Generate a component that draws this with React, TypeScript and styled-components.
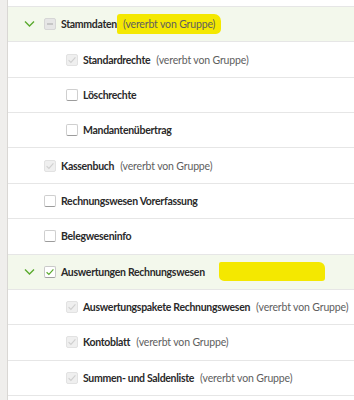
import React from "react";
import styled, { createGlobalStyle, css } from "styled-components";

const Global = createGlobalStyle`
  html, body { margin: 0; padding: 0; background: #fff; }
  body { font-family: Lato, "Open Sans", sans-serif; overflow: hidden; }
`;

const Page = styled.div`
  display: flex;
  width: 354px;
  height: 400px;
  overflow: hidden;
`;

const SideStrip = styled.div`
  width: 7px;
  flex: none;
  background: #efeeec;
  border-right: 1px solid #d9d7d4;
`;

const List = styled.div`
  flex: 1;
  display: flex;
  flex-direction: column;
`;

const TopGap = styled.div`
  height: 6px;
  flex: none;
  border-bottom: 1px solid #e6e6e6;
`;

const Row = styled.div<{ $group?: boolean; $level: number }>`
  flex: none;
  height: 34.36px;
  border-bottom: 1px solid #e6e6e6;
  display: flex;
  align-items: center;
  padding-left: ${(p) => (p.$level === 2 ? 58 : 36)}px;
  background: ${(p) => (p.$group ? "#f3f8ec" : "#fff")};
  position: relative;
`;

const Chevron = styled.svg`
  position: absolute;
  left: 16px;
  top: 50%;
  margin-top: -4px;
  width: 11px;
  height: 8px;
`;

type BoxState = "unchecked" | "checked" | "inherited" | "partial";

const Box = styled.span<{ $state: BoxState }>`
  width: 12px;
  height: 12px;
  flex: none;
  box-sizing: border-box;
  border-radius: 2px;
  display: inline-flex;
  align-items: center;
  justify-content: center;
  margin-right: 5px;
  ${(p) =>
    p.$state === "unchecked" &&
    css`
      background: #fff;
      border: 1px solid #cfcfcf;
      border-bottom-color: #9c9c9c;
    `}
  ${(p) =>
    p.$state === "checked" &&
    css`
      background: #fff;
      border: 1px solid #c9c9c9;
      border-bottom-color: #a0a0a0;
    `}
  ${(p) =>
    p.$state === "inherited" &&
    css`
      background: #efefef;
      border: 1px solid #e2e2e2;
    `}
  ${(p) =>
    p.$state === "partial" &&
    css`
      background: #e6e6e6;
      border: 1px solid #d6d6d6;
    `}
`;

const Label = styled.span`
  font-size: 10.5px;
  font-weight: 700;
  letter-spacing: -0.3px;
  color: #2a2a2a;
  white-space: nowrap;
`;

const Hint = styled.span<{ $marked?: boolean }>`
  font-size: 10.5px;
  font-weight: 400;
  letter-spacing: -0.15px;
  color: #5e5e5e;
  white-space: nowrap;
  margin-left: 6px;
  ${(p) =>
    p.$marked &&
    css`
      background: #f4e800;
      margin-left: 0px;
      padding: 4px 6px 4px 6px;
      border-radius: 3px 7px 5px 2px;
    `}
`;

const Marker = styled.span`
  display: inline-block;
  margin-left: 14px;
  width: 106px;
  height: 19px;
  background: #f4e800;
  border-radius: 2px 6px 3px 5px;
`;

function BoxIcon({ state }: { state: BoxState }) {
  return (
    <Box $state={state}>
      {state === "checked" && (
        <svg width="10" height="10" viewBox="0 0 10 10">
          <path d="M1.6 5.2 L3.9 7.4 L8.4 2.3" fill="none" stroke="#5aaa2e" strokeWidth="1.2" />
        </svg>
      )}
      {state === "inherited" && (
        <svg width="10" height="10" viewBox="0 0 10 10">
          <path d="M1.6 5.2 L3.9 7.4 L8.4 2.3" fill="none" stroke="#cfcfcf" strokeWidth="1.1" />
        </svg>
      )}
      {state === "partial" && (
        <svg width="10" height="10" viewBox="0 0 10 10">
          <path d="M2 5 H8" stroke="#b8b8b8" strokeWidth="1.4" />
        </svg>
      )}
    </Box>
  );
}

type Item = {
  label: string;
  level: number;
  state: BoxState;
  group?: boolean;
  hint?: boolean;
  marked?: boolean;
  marker?: boolean;
};

const items: Item[] = [
  { label: "Stammdaten", level: 1, state: "partial", group: true, hint: true, marked: true },
  { label: "Standardrechte", level: 2, state: "inherited", hint: true },
  { label: "Löschrechte", level: 2, state: "unchecked" },
  { label: "Mandantenübertrag", level: 2, state: "unchecked" },
  { label: "Kassenbuch", level: 1, state: "inherited", hint: true },
  { label: "Rechnungswesen Vorerfassung", level: 1, state: "unchecked" },
  { label: "Belegweseninfo", level: 1, state: "unchecked" },
  { label: "Auswertungen Rechnungswesen", level: 1, state: "checked", group: true, marker: true },
  { label: "Auswertungspakete Rechnungswesen", level: 2, state: "inherited", hint: true },
  { label: "Kontoblatt", level: 2, state: "inherited", hint: true },
  { label: "Summen- und Saldenliste", level: 2, state: "inherited", hint: true },
];

export default function App() {
  return (
    <>
      <Global />
      <Page>
        <SideStrip />
        <List>
          <TopGap />
          {items.map((it) => (
            <Row key={it.label} $group={it.group} $level={it.level}>
              {it.group && (
                <Chevron viewBox="0 0 11 8">
                  <path d="M1 1.5 L5.5 6 L10 1.5" fill="none" stroke="#5aaa2e" strokeWidth="1.4" />
                </Chevron>
              )}
              <BoxIcon state={it.state} />
              <Label>{it.label}</Label>
              {it.hint && <Hint $marked={it.marked}>(vererbt von Gruppe)</Hint>}
              {it.marker && <Marker />}
            </Row>
          ))}
        </List>
      </Page>
    </>
  );
}
